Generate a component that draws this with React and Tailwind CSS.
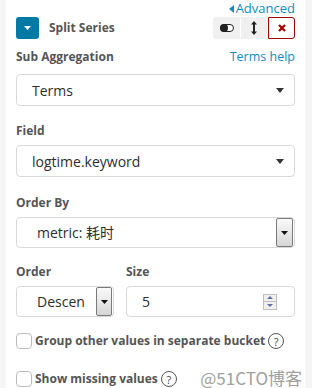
import React from 'react';

const Caret = () => (
  <svg width="8" height="5" viewBox="0 0 8 5" className="shrink-0">
    <path d="M0 0h8L4 5z" fill="#333" />
  </svg>
);

const NativeArrow = ({ className = '' }) => (
  <div className={`flex items-center justify-center border border-[#7a7a7a] rounded-[2px] bg-gradient-to-b from-[#fafafa] to-[#d6d6d6] ${className}`}>
    <svg width="7" height="4" viewBox="0 0 7 4">
      <path d="M0 0h7L3.5 4z" fill="#111" />
    </svg>
  </div>
);

const Help = () => (
  <span className="inline-flex items-center justify-center w-[16px] h-[16px] rounded-full border border-[#555] text-[11px] leading-none text-[#444] font-normal ml-[3px]">?</span>
);

const Label = ({ children }) => (
  <div className="text-[12px] font-bold text-[#555] leading-[16px] h-[16px]">{children}</div>
);

export default function App() {
  return (
    <div className="w-[312px] h-[388px] overflow-hidden bg-[#f5f5f5] flex" style={{ fontFamily: '"Open Sans", "Noto Sans CJK SC", sans-serif' }}>
      <div className="ml-[6px] w-[299px] bg-white pl-[10px] pr-[10px] relative">
        <div className="flex justify-end items-center h-[17px] text-[13px] text-[#0f8dc0] pt-[1px]">
          <svg width="5" height="8" viewBox="0 0 5 8" className="mr-[2px]">
            <path d="M5 0v8L0 4z" fill="#0f8dc0" />
          </svg>
          Advanced
        </div>
        <div className="flex items-center h-[22px]">
          <div className="w-[23px] h-[22px] rounded-[3px] bg-[#0079a5] flex items-center justify-center">
            <svg width="7" height="4" viewBox="0 0 7 4">
              <path d="M0 0h7L3.5 4z" fill="#fff" />
            </svg>
          </div>
          <div className="ml-[10px] text-[12px] font-bold text-[#555]">Split Series</div>
          <div className="ml-auto flex h-[22px]">
            <div className="w-[27px] bg-[#f0f0f0] rounded-l-[3px] flex items-center justify-center">
              <svg width="14" height="8" viewBox="0 0 14 8">
                <rect x="0.5" y="0.5" width="13" height="7" rx="3.5" fill="#fff" stroke="#222" />
                <circle cx="4" cy="4" r="4" fill="#222" />
              </svg>
            </div>
            <div className="w-[26px] ml-[1px] bg-[#f0f0f0] flex items-center justify-center">
              <svg width="6" height="14" viewBox="0 0 6 14">
                <path d="M3 0L6 3.5H4V10.5H6L3 14L0 10.5H2V3.5H0z" fill="#222" />
              </svg>
            </div>
            <div className="w-[27px] ml-[1px] border border-[#a30000] rounded-r-[3px] bg-white flex items-center justify-center">
              <svg width="8" height="8" viewBox="0 0 8 8">
                <path d="M1 1L7 7M7 1L1 7" stroke="#a30000" strokeWidth="2.2" />
              </svg>
            </div>
          </div>
        </div>

        <div className="flex items-center justify-between mt-[10px]">
          <Label>Sub Aggregation</Label>
          <div className="text-[12.5px] text-[#0f8dc0] leading-[16px]">Terms help</div>
        </div>
        <div className="mt-[9px] h-[32px] border border-[#d9d9d9] rounded-[4px] flex items-center pl-[15px] pr-[10px] text-[14px] text-[#2d2d2d]">
          <span className="flex-1">Terms</span>
          <Caret />
        </div>

        <div className="mt-[17px]"><Label>Field</Label></div>
        <div className="mt-[6px] h-[32px] border border-[#d9d9d9] rounded-[4px] flex items-center pl-[15px] pr-[10px] text-[14px] text-[#2d2d2d]">
          <span className="flex-1">logtime.keyword</span>
          <Caret />
        </div>

        <div className="mt-[18px]"><Label>Order By</Label></div>
        <div className="mt-[6px] h-[31px] border border-[#d9d9d9] rounded-[4px] flex items-center pl-[20px] pr-[1px] text-[14px] text-[#2d2d2d]">
          <span className="flex-1">metric: 耗时</span>
          <NativeArrow className="w-[17px] h-[29px]" />
        </div>

        <div className="flex mt-[16px]">
          <div className="w-[98px]">
            <Label>Order</Label>
            <div className="mt-[6px] h-[31px] border border-[#d9d9d9] rounded-[4px] flex items-center pl-[20px] pr-[1px] text-[14px] text-[#2d2d2d]">
              <span className="flex-1">Descen</span>
              <NativeArrow className="w-[16px] h-[29px]" />
            </div>
          </div>
          <div className="ml-[12px] flex-1">
            <Label>Size</Label>
            <div className="mt-[6px] h-[31px] border border-[#d9d9d9] rounded-[4px] flex items-center pl-[15px] pr-[17px] text-[14px] text-[#2d2d2d]">
              <span className="flex-1">5</span>
              <div className="w-[14px] h-[16px] border border-[#bfbfbf] flex flex-col bg-[#f0f0f0]">
                <div className="flex-1 flex items-center justify-center border-b border-[#bfbfbf]">
                  <svg width="6" height="3" viewBox="0 0 6 3"><path d="M0 3h6L3 0z" fill="#5a6ea8" /></svg>
                </div>
                <div className="flex-1 flex items-center justify-center">
                  <svg width="6" height="3" viewBox="0 0 6 3"><path d="M0 0h6L3 3z" fill="#5a6ea8" /></svg>
                </div>
              </div>
            </div>
          </div>
        </div>

        <div className="flex items-center h-[16px] mt-[16px] text-[12px] font-bold text-[#555] whitespace-nowrap">
          <div className="w-[16px] h-[16px] border border-[#bbb] rounded-[4px] mr-[3px]" />
          <span>Group other values in separate bucket</span>
          <Help />
        </div>
        <div className="flex items-center h-[16px] mt-[22px] text-[12px] font-bold text-[#555] whitespace-nowrap">
          <div className="w-[16px] h-[16px] border border-[#bbb] rounded-[4px] mr-[3px]" />
          <span>Show missing values</span>
          <Help />
        </div>
        <div className="absolute right-[3px] top-[366px] text-[17px] leading-[24px] text-[#a0a0a0]" style={{ fontFamily: '"Noto Sans CJK SC", sans-serif' }}>@51CTO博客</div>
      </div>
    </div>
  );
}
